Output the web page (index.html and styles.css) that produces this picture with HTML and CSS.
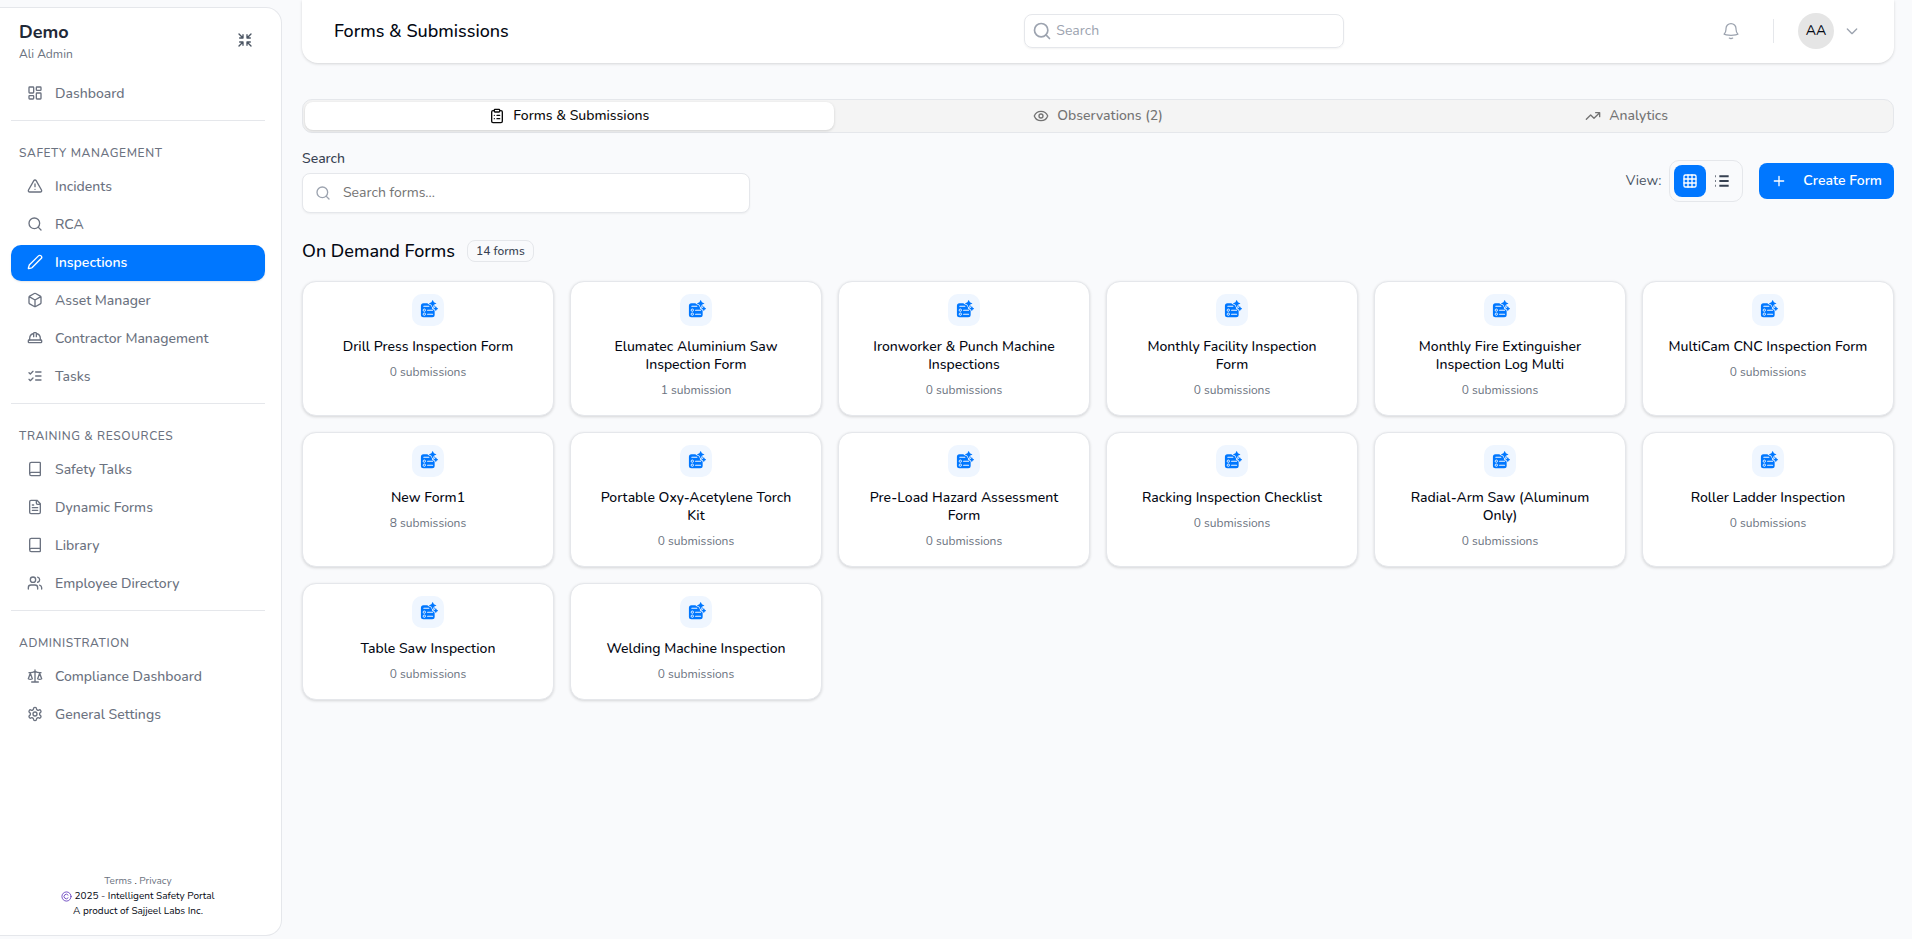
FILE: index.html
```html
<!DOCTYPE html>
<html lang="en">
<head>
  <meta charset="UTF-8" />
  <meta name="viewport" content="width=device-width, initial-scale=1" />
  <title>Forms & Submissions</title>
  <link rel="stylesheet" href="styles.css">
</head>
<body>
  <!-- shared icons -->
  <svg class="sprite" aria-hidden="true">
    <symbol id="i-search" viewBox="0 0 24 24"><circle cx="11" cy="11" r="8"/><path d="m21 21-4.3-4.3"/></symbol>
    <symbol id="i-book" viewBox="0 0 24 24"><path d="M4 19.5v-15A2.5 2.5 0 0 1 6.5 2H19a1 1 0 0 1 1 1v18a1 1 0 0 1-1 1H6.5a1 1 0 0 1 0-5H20"/></symbol>
    <symbol id="i-form" viewBox="0 0 24 24">
      <rect x="3.500" y="4" width="16.500" height="16.800" rx="3" fill="currentColor"/>
      <path fill="none" stroke="#eff6ff" stroke-width="1.300" stroke-linecap="round" d="M7 7.400h6M11.500 12.200h6M11.500 17h6"/>
      <g fill="none" stroke="#eff6ff" stroke-width="1.100"><circle cx="7.600" cy="12.200" r="1.400"/><circle cx="7.600" cy="17" r="1.400"/></g>
      <path fill="currentColor" stroke="#eff6ff" stroke-width="1.600" paint-order="stroke" d="M17.600-.2l1.500 3 3.100 1.500-3.100 1.500-1.500 3.200-1.500-3.200-3.100-1.500 3.100-1.500zM21.400 7.200l1.100 2.100 2.100 1.100-2.100 1.100-1.100 2.100-1.100-2.100-2.100-1.100 2.100-1.100z"/>
    </symbol>
  </svg>

  <aside class="sidebar">
    <div class="brand">
      <div>
        <div class="brand-name">Demo</div>
        <div class="brand-user">Ali Admin</div>
      </div>
      <button class="collapse" aria-label="Collapse sidebar">
        <svg class="icon" viewBox="0 0 24 24"><path d="M3 3l6 6M9 4v5H4M21 3l-6 6M15 4v5h5M3 21l6-6M4 15h5v5M21 21l-6-6M20 15h-5v5"/></svg>
      </button>
    </div>

    <nav class="menu">
      <a href="#"><svg class="icon" viewBox="0 0 24 24"><rect x="3" y="3" width="7" height="9" rx="1"/><rect x="14" y="3" width="7" height="5" rx="1"/><rect x="14" y="12" width="7" height="9" rx="1"/><rect x="3" y="16" width="7" height="5" rx="1"/></svg>Dashboard</a>

      <hr>
      <h3>SAFETY MANAGEMENT</h3>
      <a href="#"><svg class="icon" viewBox="0 0 24 24"><path d="m21.730 18-8-14a2 2 0 0 0-3.480 0l-8 14A2 2 0 0 0 4 21h16a2 2 0 0 0 1.730-3M12 9v4M12 17h.01"/></svg>Incidents</a>
      <a href="#"><svg class="icon"><use href="#i-search"/></svg>RCA</a>
      <a href="#" class="active"><svg class="icon" viewBox="0 0 24 24"><path d="M21.200 6.800a1 1 0 0 0-4-4L3.800 16.200a2 2 0 0 0-.5.800L2 21.400a.5.5 0 0 0 .6.6L7 20.700a2 2 0 0 0 .8-.5z"/></svg>Inspections</a>
      <a href="#"><svg class="icon" viewBox="0 0 24 24"><path d="M21 8a2 2 0 0 0-1-1.730l-7-4a2 2 0 0 0-2 0l-7 4A2 2 0 0 0 3 8v8a2 2 0 0 0 1 1.730l7 4a2 2 0 0 0 2 0l7-4A2 2 0 0 0 21 16ZM3.300 7l8.700 5 8.700-5M12 22V12"/></svg>Asset Manager</a>
      <a href="#"><svg class="icon" viewBox="0 0 24 24"><path d="M10 10V5a1 1 0 0 1 1-1h2a1 1 0 0 1 1 1v5M14 5a8 8 0 0 1 6 8v2M4 15v-2a8 8 0 0 1 6-8"/><rect x="2" y="15" width="20" height="4" rx="1"/></svg>Contractor Management</a>
      <a href="#"><svg class="icon" viewBox="0 0 24 24"><path d="m3 17 2 2 4-4M3 7l2 2 4-4M13 6h8M13 12h8M13 18h8"/></svg>Tasks</a>

      <hr>
      <h3>TRAINING &amp; RESOURCES</h3>
      <a href="#"><svg class="icon"><use href="#i-book"/></svg>Safety Talks</a>
      <a href="#"><svg class="icon" viewBox="0 0 24 24"><path d="M15 2H6a2 2 0 0 0-2 2v16a2 2 0 0 0 2 2h12a2 2 0 0 0 2-2V7ZM14 2v4a2 2 0 0 0 2 2h4M10 9H8M16 13H8M16 17H8"/></svg>Dynamic Forms</a>
      <a href="#"><svg class="icon"><use href="#i-book"/></svg>Library</a>
      <a href="#"><svg class="icon" viewBox="0 0 24 24"><path d="M16 21v-2a4 4 0 0 0-4-4H6a4 4 0 0 0-4 4v2M22 21v-2a4 4 0 0 0-3-3.870M16 3.130a4 4 0 0 1 0 7.750"/><circle cx="9" cy="7" r="4"/></svg>Employee Directory</a>

      <hr>
      <h3>ADMINISTRATION</h3>
      <a href="#"><svg class="icon" viewBox="0 0 24 24"><path d="m16 16 3-8 3 8c-.87.65-1.920 1-3 1s-2.130-.35-3-1ZM2 16l3-8 3 8c-.87.65-1.920 1-3 1s-2.130-.35-3-1ZM7 21h10M12 3v18M3 7h2c2 0 5-1 7-2 2 1 5 2 7 2h2"/></svg>Compliance Dashboard</a>
      <a href="#"><svg class="icon" viewBox="0 0 24 24"><path d="M12.220 2h-.44a2 2 0 0 0-2 2v.18a2 2 0 0 1-1 1.730l-.43.25a2 2 0 0 1-2 0l-.15-.08a2 2 0 0 0-2.730.73l-.22.38a2 2 0 0 0 .73 2.730l.15.1a2 2 0 0 1 1 1.720v.51a2 2 0 0 1-1 1.740l-.15.09a2 2 0 0 0-.73 2.730l.22.38a2 2 0 0 0 2.730.73l.15-.08a2 2 0 0 1 2 0l.43.25a2 2 0 0 1 1 1.730V20a2 2 0 0 0 2 2h.44a2 2 0 0 0 2-2v-.18a2 2 0 0 1 1-1.730l.43-.25a2 2 0 0 1 2 0l.15.08a2 2 0 0 0 2.730-.73l.22-.39a2 2 0 0 0-.73-2.730l-.15-.08a2 2 0 0 1-1-1.740v-.5a2 2 0 0 1 1-1.740l.15-.09a2 2 0 0 0 .73-2.730l-.22-.38a2 2 0 0 0-2.730-.73l-.15.08a2 2 0 0 1-2 0l-.43-.25a2 2 0 0 1-1-1.730V4a2 2 0 0 0-2-2z"/><circle cx="12" cy="12" r="3"/></svg>General Settings</a>
    </nav>

    <footer class="legal">
      <div><a href="#">Terms</a> . <a href="#">Privacy</a></div>
      <div class="copyright">
        <svg class="icon" viewBox="0 0 24 24" role="img" aria-label="Copyright"><circle cx="12" cy="12" r="10"/><path d="M15.500 15.200a5 5 0 1 1 0-6.400"/></svg>
        2025 - Intelligent Safety Portal
      </div>
      <div>A product of Sajjeel Labs Inc.</div>
    </footer>
  </aside>

  <div class="page">
    <header class="topbar">
      <h1>Forms &amp; Submissions</h1>
      <div class="top-search">
        <svg class="icon"><use href="#i-search"/></svg>
        <input type="text" placeholder="Search" aria-label="Search">
      </div>
      <div class="account">
        <button class="bell" aria-label="Notifications">
          <svg class="icon" viewBox="0 0 24 24"><path d="M14.860 17.080a23.850 23.850 0 0 0 5.450-1.310A8.970 8.970 0 0 1 18 9.750V9A6 6 0 0 0 6 9v.75a8.970 8.970 0 0 1-2.310 6.020c1.730.64 3.560 1.090 5.450 1.310m5.720 0a24.260 24.260 0 0 1-5.720 0M10 20.500a3.500 3.500 0 0 0 4 0"/></svg>
        </button>
        <button class="profile" aria-label="Account menu">
          <span class="avatar">AA</span>
          <svg class="icon" viewBox="0 0 24 24"><path d="m5 9 7 7 7-7"/></svg>
        </button>
      </div>
    </header>

    <main>
      <div class="tabs">
        <button class="tab selected">
          <svg class="icon" viewBox="0 0 24 24"><rect x="8" y="2" width="8" height="4" rx="1"/><path d="M16 4h2a2 2 0 0 1 2 2v14a2 2 0 0 1-2 2H6a2 2 0 0 1-2-2V6a2 2 0 0 1 2-2h2M12 11h4M12 16h4M8 11h.01M8 16h.01"/></svg>
          Forms &amp; Submissions
        </button>
        <button class="tab">
          <svg class="icon" viewBox="0 0 24 24"><path d="M2.060 12.350a1 1 0 0 1 0-.7 10.750 10.750 0 0 1 19.880 0 1 1 0 0 1 0 .7 10.750 10.750 0 0 1-19.880 0"/><circle cx="12" cy="12" r="3"/></svg>
          Observations (2)
        </button>
        <button class="tab">
          <svg class="icon" viewBox="0 0 24 24"><path d="m22 7-8.500 8.500-5-5L2 17M16 7h6v6"/></svg>
          Analytics
        </button>
      </div>

      <div class="toolbar">
        <div class="form-search">
          <label for="formSearch">Search</label>
          <div class="search-box">
            <svg class="icon"><use href="#i-search"/></svg>
            <input type="text" id="formSearch" placeholder="Search forms...">
          </div>
        </div>
        <div class="actions">
          <span class="view-label">View:</span>
          <div class="view-toggle">
            <button class="on" aria-label="Grid view"><svg class="icon" viewBox="0 0 24 24"><rect x="3" y="3" width="18" height="18" rx="2"/><path d="M3 9h18M3 15h18M9 3v18M15 3v18"/></svg></button>
            <button class="list" aria-label="List view"><svg class="icon" viewBox="0 0 24 24"><path d="M8 5h14M8 12h14M8 19h14M2 5h1M2 12h1M2 19h1"/></svg></button>
          </div>
          <button class="create">
            <svg class="icon" viewBox="0 0 24 24"><path d="M5 12h14M12 5v14"/></svg>
            Create Form
          </button>
        </div>
      </div>

      <div class="section-title">
        <h2>On Demand Forms</h2>
        <span class="count">14 forms</span>
      </div>

      <div class="cards">
        <a href="#" class="card"><span class="card-icon"><svg><use href="#i-form"/></svg></span><h4>Drill Press Inspection Form</h4><p>0 submissions</p></a>
        <a href="#" class="card"><span class="card-icon"><svg><use href="#i-form"/></svg></span><h4>Elumatec Aluminium Saw Inspection Form</h4><p>1 submission</p></a>
        <a href="#" class="card"><span class="card-icon"><svg><use href="#i-form"/></svg></span><h4>Ironworker &amp; Punch Machine Inspections</h4><p>0 submissions</p></a>
        <a href="#" class="card"><span class="card-icon"><svg><use href="#i-form"/></svg></span><h4>Monthly Facility Inspection Form</h4><p>0 submissions</p></a>
        <a href="#" class="card"><span class="card-icon"><svg><use href="#i-form"/></svg></span><h4>Monthly Fire Extinguisher Inspection Log Multi</h4><p>0 submissions</p></a>
        <a href="#" class="card"><span class="card-icon"><svg><use href="#i-form"/></svg></span><h4>MultiCam CNC Inspection Form</h4><p>0 submissions</p></a>
        <a href="#" class="card"><span class="card-icon"><svg><use href="#i-form"/></svg></span><h4>New Form1</h4><p>8 submissions</p></a>
        <a href="#" class="card"><span class="card-icon"><svg><use href="#i-form"/></svg></span><h4>Portable Oxy-Acetylene Torch Kit</h4><p>0 submissions</p></a>
        <a href="#" class="card"><span class="card-icon"><svg><use href="#i-form"/></svg></span><h4>Pre-Load Hazard Assessment Form</h4><p>0 submissions</p></a>
        <a href="#" class="card"><span class="card-icon"><svg><use href="#i-form"/></svg></span><h4>Racking Inspection Checklist</h4><p>0 submissions</p></a>
        <a href="#" class="card"><span class="card-icon"><svg><use href="#i-form"/></svg></span><h4>Radial-Arm Saw (Aluminum Only)</h4><p>0 submissions</p></a>
        <a href="#" class="card"><span class="card-icon"><svg><use href="#i-form"/></svg></span><h4>Roller Ladder Inspection</h4><p>0 submissions</p></a>
        <a href="#" class="card"><span class="card-icon"><svg><use href="#i-form"/></svg></span><h4>Table Saw Inspection</h4><p>0 submissions</p></a>
        <a href="#" class="card"><span class="card-icon"><svg><use href="#i-form"/></svg></span><h4>Welding Machine Inspection</h4><p>0 submissions</p></a>
      </div>
    </main>
  </div>
</body>
</html>
```
FILE: styles.css
```css
* {
  box-sizing: border-box;
}

body {
  margin: 0;
  min-height: 100vh;
  display: flex;
  gap: 20px;
  background: #f9fafc;
  color: #030712;
  font-family: Nunito, Lato, sans-serif;
  font-size: 14px;
  line-height: 20px;
}

h1, h2, h3, h4, p {
  margin: 0;
  font-weight: 500;
}

a {
  color: inherit;
  text-decoration: none;
}

button, input {
  font: inherit;
  color: inherit;
}

button {
  border: none;
  background: none;
  padding: 0;
  cursor: pointer;
}

.sprite {
  display: none;
}

.icon {
  width: 16px;
  height: 16px;
  flex-shrink: 0;
  fill: none;
  stroke: currentColor;
  stroke-width: 2;
  stroke-linecap: round;
  stroke-linejoin: round;
}

/* sidebar */
.sidebar {
  width: 282px;
  flex-shrink: 0;
  display: flex;
  flex-direction: column;
  margin: 7px 0 3px;
  padding: 12px 16px 16px 11px;
  background: #fff;
  border: 1px solid #e5e7eb;
  border-left: none;
  border-radius: 0 16px 16px 0;
}

.brand {
  display: flex;
  justify-content: space-between;
  align-items: center;
  padding: 0 12px 0 8px;
  margin-bottom: 12px;
}

.brand-name {
  font-size: 18px;
  line-height: 24px;
  font-weight: 700;
  color: #1f2937;
}

.brand-user {
  font-size: 12px;
  color: #6b7280;
}

.collapse {
  display: flex;
  padding-bottom: 4px;
  color: #4b5563;
}

.menu {
  display: flex;
  flex-direction: column;
  gap: 2px;
  color: #6b7280;
}

.menu a {
  display: flex;
  align-items: center;
  gap: 12px;
  height: 36px;
  padding: 0 16px;
  border-radius: 10px;
  font-weight: 500;
}

.menu a .icon {
  margin-bottom: 2px;
}

.menu .active {
  background: #0077ff;
  color: #fff;
  font-weight: 600;
  box-shadow: 0 1px 2px rgba(0, 0, 0, 0.1);
}

.menu hr {
  width: 100%;
  margin: 6px 0 17px;
  border: none;
  border-top: 1px solid #e5e7eb;
}

.menu h3 {
  padding: 4px 8px 5px;
  font-size: 12px;
  line-height: 18px;
  letter-spacing: 0.05em;
}

.legal {
  margin-top: auto;
  text-align: center;
  font-size: 10px;
  line-height: 15px;
}

.legal a {
  color: #6b7280;
}

.copyright {
  display: flex;
  justify-content: center;
  align-items: center;
  gap: 2px;
}

.copyright .icon {
  width: 11px;
  height: 11px;
  color: #6b46c1;
}

/* top bar */
.page {
  flex: 1;
  min-width: 0;
  padding-right: 18px;
}

.topbar {
  display: grid;
  grid-template-columns: 4fr 320px 3fr;
  align-items: center;
  height: 63px;
  padding: 0 32px 1px;
  background: #fff;
  border-radius: 0 0 16px 16px;
  box-shadow: 0 1px 3px rgba(0, 0, 0, 0.15);
}

.topbar h1 {
  font-size: 18px;
}

.top-search {
  display: flex;
  align-items: center;
  gap: 4px;
  height: 34px;
  padding: 0 7px;
  border: 1px solid #e5e7eb;
  border-radius: 8px;
  box-shadow: 0 1px 2px rgba(0, 0, 0, 0.05);
  color: #9ca3af;
}

.top-search .icon {
  width: 20px;
  height: 20px;
}

.top-search input,
.search-box input {
  flex: 1;
  min-width: 0;
  border: none;
  outline: none;
  padding: 0;
  background: none;
}

.top-search input::placeholder {
  color: #9ca3af;
}

.account {
  display: flex;
  justify-content: flex-end;
  align-items: center;
  gap: 24px;
  padding-right: 2px;
}

.bell {
  display: flex;
  padding-right: 32px;
  border-right: 1px solid #e5e7eb;
  color: #9ca3af;
  height: 24px;
  align-items: center;
}

.bell .icon {
  width: 20px;
  height: 20px;
  stroke-width: 1.5;
}

.profile {
  display: flex;
  align-items: center;
  gap: 10px;
}

.profile .icon {
  color: #9ca3af;
}

.avatar {
  width: 36px;
  height: 36px;
  border-radius: 50%;
  background: #e5e5e5;
  line-height: 36px;
  text-align: center;
  font-weight: 500;
}

/* tabs */
.tabs {
  display: grid;
  grid-template-columns: repeat(3, 1fr);
  margin-top: 36px;
  padding: 2px;
  height: 34px;
  background: #f4f4f4;
  border: 1px solid #e5e7eb;
  border-radius: 10px;
}

.tab {
  display: flex;
  justify-content: center;
  align-items: center;
  gap: 8px;
  border-radius: 8px;
  color: #737373;
  font-weight: 500;
}

.tab.selected {
  background: #fff;
  color: #0a0a0a;
  box-shadow: 0 1px 3px rgba(0, 0, 0, 0.15);
}

/* toolbar */
.toolbar {
  display: flex;
  justify-content: space-between;
  align-items: center;
  margin-top: 16px;
}

.form-search {
  width: 448px;
  color: #374151;
}

.form-search label {
  display: block;
  margin-bottom: 4px;
  font-weight: 500;
}

.search-box {
  display: flex;
  align-items: center;
  gap: 12px;
  height: 40px;
  padding: 0 12px;
  background: #fff;
  border: 1px solid #e5e7eb;
  border-radius: 8px;
  box-shadow: 0 1px 2px rgba(0, 0, 0, 0.05);
}

.search-box .icon {
  color: #9ca3af;
}

.search-box input::placeholder {
  color: #737373;
}

.actions {
  display: flex;
  align-items: center;
}

.view-label {
  margin-right: 8px;
  color: #4b5563;
}

.view-toggle {
  display: flex;
  padding: 4px;
  margin-right: 16px;
  border: 1px solid #e5e7eb;
  border-radius: 10px;
}

.view-toggle button {
  display: flex;
  justify-content: center;
  align-items: center;
  width: 32px;
  height: 32px;
  border-radius: 8px;
  color: #374151;
}

.view-toggle .list .icon {
  stroke-width: 3;
  stroke-linecap: butt;
}

.view-toggle .on {
  background: #0077ff;
  color: #fff;
}

.create {
  display: flex;
  align-items: center;
  gap: 16px;
  height: 36px;
  padding: 0 12px;
  border-radius: 8px;
  background: #0077ff;
  color: #fff;
  font-weight: 600;
}

.section-title {
  display: flex;
  align-items: center;
  gap: 12px;
  margin: 24px 0 16px;
}

.section-title h2 {
  font-size: 18px;
  line-height: 28px;
}

.count {
  padding: 0 8px;
  border: 1px solid #e5e7eb;
  border-radius: 8px;
  font-size: 12px;
  font-weight: 500;
  color: #374151;
}

/* form cards */
.cards {
  display: grid;
  grid-template-columns: repeat(6, 1fr);
  gap: 16px;
}

.card {
  display: flex;
  flex-direction: column;
  align-items: center;
  padding: 12px 24px 17px;
  background: #fff;
  border: 1px solid #e5e7eb;
  border-radius: 14px;
  box-shadow: 0 1px 3px rgba(0, 0, 0, 0.15);
  text-align: center;
}

.card-icon {
  display: flex;
  justify-content: center;
  align-items: center;
  width: 32px;
  height: 32px;
  margin-bottom: 12px;
  border-radius: 10px;
  background: #eff6ff;
  color: #0077ff;
}

.card-icon svg {
  width: 20px;
  height: 20px;
  overflow: visible;
}

.card h4 {
  line-height: 18px;
}

.card p {
  margin-top: 8px;
  font-size: 12px;
  line-height: 16px;
  font-weight: 400;
  color: #6b7280;
}
```
